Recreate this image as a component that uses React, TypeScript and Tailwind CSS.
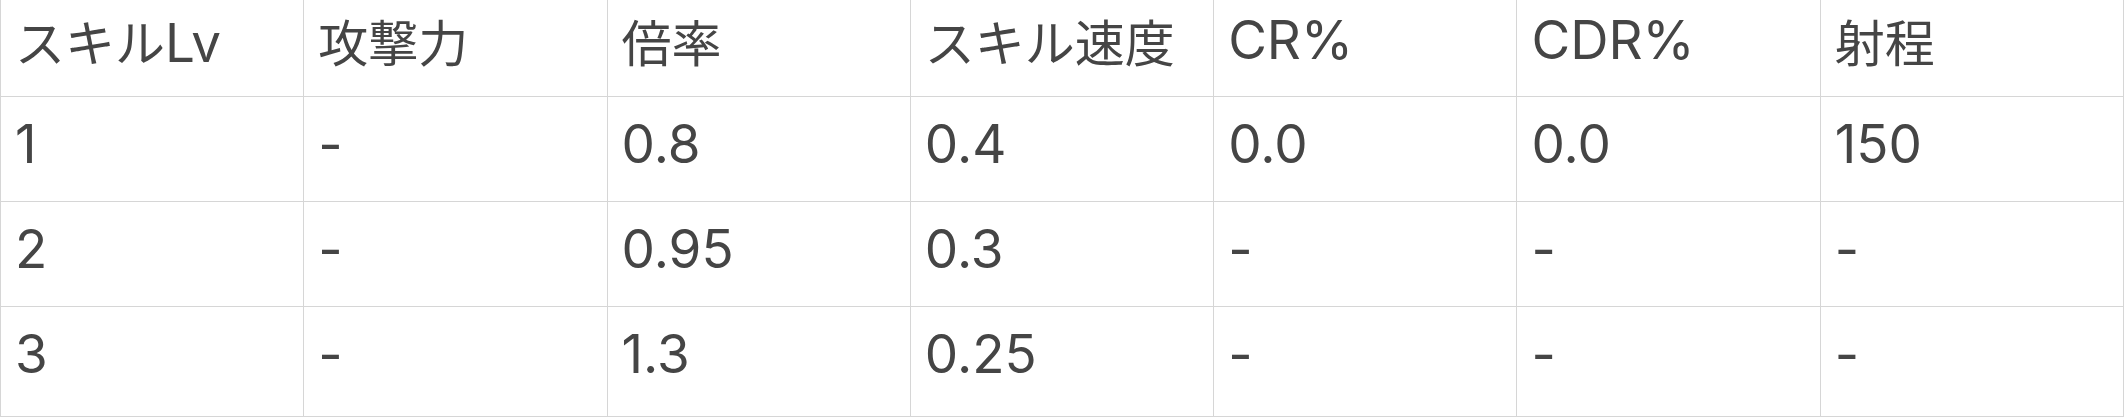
const headers: { jp?: string; en?: string }[][] = [
  [{ jp: "スキル" }, { en: "Lv" }],
  [{ jp: "攻撃力" }],
  [{ jp: "倍率" }],
  [{ jp: "スキル速度" }],
  [{ en: "CR%" }],
  [{ en: "CDR%" }],
  [{ jp: "射程" }],
]

const rows = [
  ["1", "-", "0.8", "0.4", "0.0", "0.0", "150"],
  ["2", "-", "0.95", "0.3", "-", "-", "-"],
  ["3", "-", "1.3", "0.25", "-", "-", "-"],
]

const latin = "font-['Inter','Noto_Sans_CJK_JP',sans-serif] text-[53px]"
const cjk = "font-['Noto_Sans_CJK_JP',sans-serif] text-[50px]"

export default function App() {
  return (
    <div className="w-[2124px] h-[417px] bg-white text-[#454545] overflow-hidden">
      <div className="grid grid-cols-7 border-l border-[#d6d6d6]">
        {headers.map((parts, i) => (
          <div
            key={i}
            className={`h-[97px] px-[14px] border-r border-b border-[#d6d6d6] whitespace-nowrap leading-[81px] ${latin}`}
          >
            {parts.map((p, j) =>
              p.jp ? (
                <span key={j} className={cjk}>
                  {p.jp}
                </span>
              ) : (
                <span key={j}>{p.en}</span>
              ),
            )}
          </div>
        ))}
        {rows.map((row, r) =>
          row.map((cell, c) => (
            <div
              key={`${r}-${c}`}
              className={`${r === rows.length - 1 ? "h-[110px]" : "h-[105px]"} px-[14px] border-r border-b border-[#d6d6d6] leading-[95px] ${latin}`}
            >
              {cell}
            </div>
          )),
        )}
      </div>
    </div>
  )
}
